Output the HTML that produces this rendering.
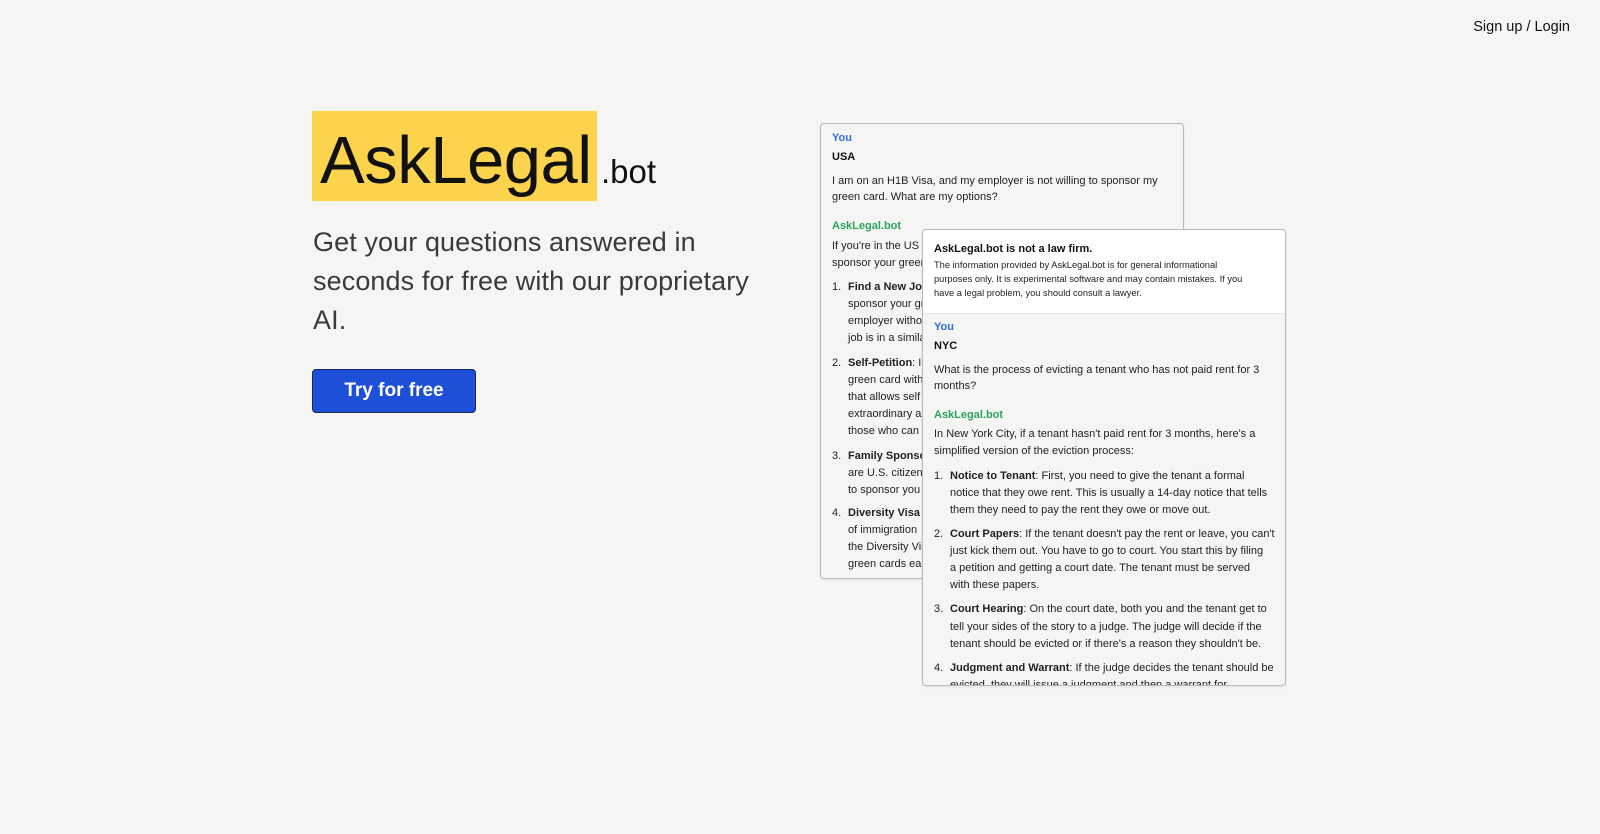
<!DOCTYPE html>
<html><head><meta charset="utf-8"><style>
*{margin:0;padding:0;box-sizing:border-box}
body{width:1600px;height:834px;background:#f5f5f3;font-family:"Liberation Sans",sans-serif;color:#111;position:relative;overflow:hidden}
.a{position:absolute;white-space:nowrap}
.logo{left:312px;top:111px;width:285px;height:90px;background:#fcd34d}
.card{position:absolute;border:1px solid #b9b9b9;border-radius:4px;background:#f5f5f3;overflow:hidden;box-shadow:0 1px 2px rgba(0,0,0,.08)}
.l{position:absolute;white-space:nowrap;font-size:11px;line-height:17px;color:#222}
.b{font-weight:bold;color:#111}
.bot{color:#2aa55a;font-weight:bold}
</style></head><body>
<div class="a" style="right:30px;top:19px;font-size:14.5px;color:#111">Sign up / Login</div>
<div class="a logo"></div>
<div class="a" style="left:320px;top:121px;font-size:67px;line-height:80px;letter-spacing:-0.5px;color:#111">AskLegal</div>
<div class="a" style="left:601px;top:152px;font-size:33px;line-height:40px;color:#111">.bot</div>
<div class="a" style="left:313px;top:223px;font-size:27px;line-height:39px;color:#3a3a3a;letter-spacing:0.1px">Get your questions answered in<br>seconds for free with our proprietary<br>AI.</div>
<div class="a" style="left:312px;top:369px;width:164px;height:44px;background:#1d4fd8;border:1px solid #1a2a55;border-radius:4px;color:#fff;font-size:19px;font-weight:bold;text-align:center;line-height:42px">Try for free</div>

<div class="card" style="left:820px;top:123px;width:364px;height:456px">
<div class="l bot" style="left:11px;top:6px;color:#2f6fe0">You</div>
<div class="l b" style="left:11px;top:25px">USA</div>
<div class="l" style="left:11px;top:49px">I am on an H1B Visa, and my employer is not willing to sponsor my</div>
<div class="l" style="left:11px;top:65px">green card. What are my options?</div>
<div class="l bot" style="left:11px;top:94px">AskLegal.bot</div>
<div class="l" style="left:11px;top:114px">If you're in the US and your employer won't</div>
<div class="l" style="left:11px;top:131px">sponsor your green card, you have options:</div>
<div class="l" style="left:11px;top:155px">1.</div><div class="l" style="left:27px;top:155px"><b>Find a New Job</b>: an employer willing to</div>
<div class="l" style="left:27px;top:172px">sponsor your green card</div>
<div class="l" style="left:27px;top:189px">employer without losing</div>
<div class="l" style="left:27px;top:206px">job is in a similar role</div>
<div class="l" style="left:11px;top:231px">2.</div><div class="l" style="left:27px;top:231px"><b>Self-Petition</b>: In some</div>
<div class="l" style="left:27px;top:248px">green card without</div>
<div class="l" style="left:27px;top:265px">that allows self</div>
<div class="l" style="left:27px;top:282px">extraordinary ability</div>
<div class="l" style="left:27px;top:299px">those who can</div>
<div class="l" style="left:11px;top:324px">3.</div><div class="l" style="left:27px;top:324px"><b>Family Sponsorship</b></div>
<div class="l" style="left:27px;top:341px">are U.S. citizens</div>
<div class="l" style="left:27px;top:358px">to sponsor you</div>
<div class="l" style="left:11px;top:381px">4.</div><div class="l" style="left:27px;top:381px"><b>Diversity Visa</b></div>
<div class="l" style="left:27px;top:398px">of immigration</div>
<div class="l" style="left:27px;top:415px">the Diversity Visa</div>
<div class="l" style="left:27px;top:432px">green cards each</div>
</div>

<div class="card" style="left:922px;top:229px;width:364px;height:457px">
<div style="position:absolute;left:0;top:0;width:100%;height:84px;background:#fff;border-bottom:1px solid #e2e2e2"></div>
<div class="l b" style="left:11px;top:11px">AskLegal.bot is not a law firm.</div>
<div class="l" style="left:11px;top:28px;font-size:9.3px;line-height:14px">The information provided by AskLegal.bot is for general informational</div>
<div class="l" style="left:11px;top:42px;font-size:9.3px;line-height:14px">purposes only. It is experimental software and may contain mistakes. If you</div>
<div class="l" style="left:11px;top:56px;font-size:9.3px;line-height:14px">have a legal problem, you should consult a lawyer.</div>
<div class="l bot" style="left:11px;top:89px;color:#2f6fe0">You</div>
<div class="l b" style="left:11px;top:108px">NYC</div>
<div class="l" style="left:11px;top:132px">What is the process of evicting a tenant who has not paid rent for 3</div>
<div class="l" style="left:11px;top:148px">months?</div>
<div class="l bot" style="left:11px;top:177px">AskLegal.bot</div>
<div class="l" style="left:11px;top:196px">In New York City, if a tenant hasn't paid rent for 3 months, here's a</div>
<div class="l" style="left:11px;top:213px">simplified version of the eviction process:</div>
<div class="l" style="left:11px;top:238px">1.</div><div class="l" style="left:27px;top:238px"><b>Notice to Tenant</b>: First, you need to give the tenant a formal</div>
<div class="l" style="left:27px;top:255px">notice that they owe rent. This is usually a 14-day notice that tells</div>
<div class="l" style="left:27px;top:272px">them they need to pay the rent they owe or move out.</div>
<div class="l" style="left:11px;top:296px">2.</div><div class="l" style="left:27px;top:296px"><b>Court Papers</b>: If the tenant doesn't pay the rent or leave, you can't</div>
<div class="l" style="left:27px;top:313px">just kick them out. You have to go to court. You start this by filing</div>
<div class="l" style="left:27px;top:330px">a petition and getting a court date. The tenant must be served</div>
<div class="l" style="left:27px;top:347px">with these papers.</div>
<div class="l" style="left:11px;top:371px">3.</div><div class="l" style="left:27px;top:371px"><b>Court Hearing</b>: On the court date, both you and the tenant get to</div>
<div class="l" style="left:27px;top:389px">tell your sides of the story to a judge. The judge will decide if the</div>
<div class="l" style="left:27px;top:406px">tenant should be evicted or if there's a reason they shouldn't be.</div>
<div class="l" style="left:11px;top:430px">4.</div><div class="l" style="left:27px;top:430px"><b>Judgment and Warrant</b>: If the judge decides the tenant should be</div>
<div class="l" style="left:27px;top:447px">evicted, they will issue a judgment and then a warrant for</div>
</div>
</body></html>
